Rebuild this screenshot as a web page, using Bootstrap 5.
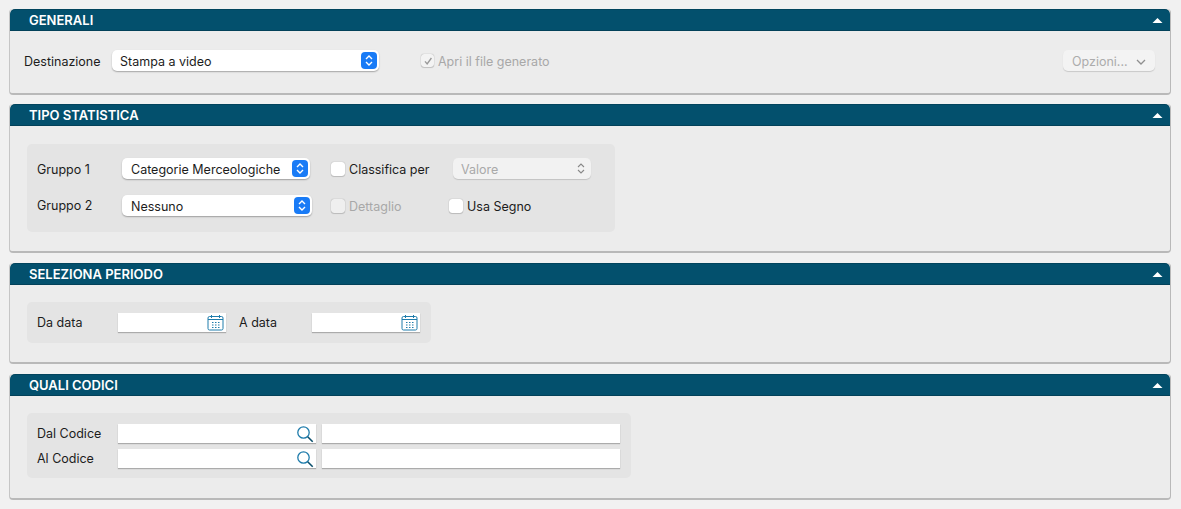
<!DOCTYPE html>
<html lang="it">
<head>
<meta charset="utf-8">
<title>Statistica</title>
<link href="https://cdn.jsdelivr.net/npm/bootstrap@5.3.0/dist/css/bootstrap.min.css" rel="stylesheet">
<script src="https://cdn.jsdelivr.net/npm/bootstrap@5.3.0/dist/js/bootstrap.bundle.min.js"></script>
<style>
html,body{height:509px;overflow:hidden}
body{background:#f1f1f1;font-family:Inter,"Liberation Sans",sans-serif;font-size:12.5px;color:#1c1c1c;padding:9px 10px 0 9px}
.pane{background:#ececec;border:0;border-right:1px solid #b9b9b9;border-bottom:2px solid #b9b9b9;border-left:1px solid #c6c6c6;border-radius:4px;margin-bottom:9px;overflow:hidden}
.pane-2{margin-bottom:10px}
.pane-3{margin-bottom:10px}
.pane-head{background:#03506d;color:#fff;font-weight:600;font-size:13px;height:22px;line-height:22px;padding:0 0 0 19px;border-top:1px solid #02445d;border-radius:0;display:flex;justify-content:space-between;align-items:center}
.pane-head svg{margin-right:7px;display:block}
.body-1{height:62px;padding:19px 15px 0 14px}
.body-2{height:125px;padding:18px 0 0 17px}
.body-3{height:77px;padding:17px 0 0 17px}
.body-4{height:102px;padding:17px 0 0 17px}
.grp{background:#e4e4e4;border-radius:5px}
.grp-2{width:588px;height:88px;padding:14px 0 0 10px}
.grp-3{width:404px;height:41px;padding:0 0 0 10px}
.grp-4{width:604px;height:65px;padding:11px 0 0 10px}
.mac-sel.form-select{height:21px;padding:2px 24px 0 8px;font-size:12.5px;line-height:19px;color:#1c1c1c;border:0;border-radius:5px;box-shadow:0 1px 1.5px rgba(0,0,0,.3);background-color:#fff;background-size:auto;background-position:right 2px center;background-image:url("data:image/svg+xml,%3Csvg xmlns='http://www.w3.org/2000/svg' width='16' height='17'%3E%3Crect width='16' height='17' rx='4' fill='%23197bf6'/%3E%3Cpath d='M5 7l3-3 3 3M5 10l3 3 3-3' fill='none' stroke='%23fff' stroke-width='1.4'/%3E%3C/svg%3E")}
.mac-sel.sel-off.form-select{background-color:#f2f2f2;color:#a9a9a9;opacity:1;box-shadow:0 1px 1px rgba(0,0,0,.15);background-image:url("data:image/svg+xml,%3Csvg xmlns='http://www.w3.org/2000/svg' width='16' height='17'%3E%3Cpath d='M5 7l3-3 3 3M5 10l3 3 3-3' fill='none' stroke='%23888' stroke-width='1.1'/%3E%3C/svg%3E")}
.pad-9.form-select{padding-left:9px}
.w-dest{width:267px}.w-g1{width:188px}.w-g2{width:190px}.w-val{width:138px}
.lab-dest{width:88px;padding-top:3px}.lab-g{width:85px;padding-top:2px}
.btn-opz.btn{width:92px;height:21px;padding:2px 9px 0;font-size:12.5px;line-height:19px;color:#acacac;background:#f3f3f3;border:0;border-radius:5px;box-shadow:0 1px 1px rgba(0,0,0,.15);display:flex;align-items:center;justify-content:space-between;opacity:1}
.form-check-input.cb{width:14px;height:14px;margin:0;border:0;border-radius:3px;background-color:#fff;box-shadow:0 0 1px rgba(0,0,0,.4),0 1px 1px rgba(0,0,0,.15);flex:none}
.form-check-input.cb:disabled{opacity:1;background-color:#efefef}
.form-check-input.cb-on:checked{background-color:#f3f3f3;background-size:12px;background-image:url("data:image/svg+xml,%3Csvg xmlns='http://www.w3.org/2000/svg' viewBox='0 0 14 14'%3E%3Cpath d='M3.5 7.5l2.5 3 5-7' fill='none' stroke='%23999' stroke-width='1.6'/%3E%3C/svg%3E");border:0;opacity:1}
.cb-sm.form-check-input.cb{width:13px;height:13px}
.off{color:#a8a8a8}
.txt-low{padding-top:3px}
.chk-apri{margin-left:42px;height:21px;gap:4px}
.cell-a{width:122px;gap:4px;margin-left:21px}
.cell-b{width:118px;gap:4px;margin-left:19px}
.cell-c{gap:4px}
.rows-2{gap:15px}
.fld{background:#fff;height:19px;box-shadow:0 1px 1px rgba(0,0,0,.25);display:flex;align-items:center}
.fld .form-control{background:transparent;border:0;border-radius:0;height:19px;padding:0 4px;font-size:12.5px;min-height:0;box-shadow:none}
.fld svg{flex:none;margin-right:2px}
.w-d{width:108px}.w-c{width:198px}.w-t{width:298px;margin-left:6px}
.lab-c{width:81px;line-height:19px}
.lab-a{width:73px;margin-left:13px;line-height:19px}
.rows-4{gap:6px}
</style>
</head>
<body>
<div class="card pane">
  <div class="card-header pane-head"><span>GENERALI</span><svg width="11" height="7" viewBox="0 0 11 7"><path d="M5.5 1L10.5 6H.5z" fill="#fff"/></svg></div>
  <div class="card-body body-1 d-flex align-items-start">
    <label class="lab-dest">Destinazione</label>
    <select class="form-select mac-sel w-dest"><option>Stampa a video</option></select>
    <div class="d-flex align-items-center off chk-apri"><input class="form-check-input cb cb-sm cb-on" type="checkbox" checked disabled><span class="txt-low">Apri il file generato</span></div>
    <button class="btn btn-opz ms-auto" disabled type="button"><span>Opzioni...</span><svg width="10" height="6" viewBox="0 0 10 6"><path d="M1 1l4 4 4-4" fill="none" stroke="#8f8f8f" stroke-width="1.3"/></svg></button>
  </div>
</div>

<div class="card pane pane-2">
  <div class="card-header pane-head"><span>TIPO STATISTICA</span><svg width="11" height="7" viewBox="0 0 11 7"><path d="M5.5 1L10.5 6H.5z" fill="#fff"/></svg></div>
  <div class="card-body body-2">
    <div class="grp grp-2 d-flex flex-column rows-2">
      <div class="d-flex align-items-center">
        <label class="lab-g">Gruppo 1</label>
        <select class="form-select mac-sel pad-9 w-g1"><option>Categorie Merceologiche</option></select>
        <div class="d-flex align-items-center cell-a"><input class="form-check-input cb" type="checkbox"><span class="txt-low">Classifica per</span></div>
        <select class="form-select mac-sel sel-off w-val" disabled><option>Valore</option></select>
      </div>
      <div class="d-flex align-items-center">
        <label class="lab-g">Gruppo 2</label>
        <select class="form-select mac-sel pad-9 w-g2"><option>Nessuno</option></select>
        <div class="d-flex align-items-center cell-b off"><input class="form-check-input cb" type="checkbox" disabled><span class="txt-low">Dettaglio</span></div>
        <div class="d-flex align-items-center cell-c"><input class="form-check-input cb" type="checkbox"><span class="txt-low">Usa Segno</span></div>
      </div>
    </div>
  </div>
</div>

<div class="card pane pane-3">
  <div class="card-header pane-head"><span>SELEZIONA PERIODO</span><svg width="11" height="7" viewBox="0 0 11 7"><path d="M5.5 1L10.5 6H.5z" fill="#fff"/></svg></div>
  <div class="card-body body-3">
    <div class="grp grp-3 d-flex align-items-center">
      <label class="lab-c">Da data</label>
      <div class="fld w-d"><input class="form-control" type="text" aria-label="Da data"><svg width="17" height="17" viewBox="0 0 17 17"><g fill="none" stroke="#1f7cab"><rect x="1" y="2.5" width="15" height="13.5" rx="1.5"/><path d="M1 5.5h15M4.5 1v3M12.5 1v3"/><path stroke-dasharray="1.5 1.5" d="M5 8.5h8M5 11h8M5 13.5h8"/></g></svg></div>
      <label class="lab-a">A data</label>
      <div class="fld w-d"><input class="form-control" type="text" aria-label="A data"><svg width="17" height="17" viewBox="0 0 17 17"><g fill="none" stroke="#1f7cab"><rect x="1" y="2.5" width="15" height="13.5" rx="1.5"/><path d="M1 5.5h15M4.5 1v3M12.5 1v3"/><path stroke-dasharray="1.5 1.5" d="M5 8.5h8M5 11h8M5 13.5h8"/></g></svg></div>
    </div>
  </div>
</div>

<div class="card pane">
  <div class="card-header pane-head"><span>QUALI CODICI</span><svg width="11" height="7" viewBox="0 0 11 7"><path d="M5.5 1L10.5 6H.5z" fill="#fff"/></svg></div>
  <div class="card-body body-4">
    <div class="grp grp-4 d-flex flex-column rows-4">
      <div class="d-flex align-items-center">
        <label class="lab-c">Dal Codice</label>
        <div class="fld w-c"><input class="form-control" type="text" aria-label="Dal Codice"><svg width="18" height="18" viewBox="0 0 18 18"><circle cx="7.5" cy="7.5" r="5.7" fill="none" stroke="#1f7cab" stroke-width="1.3"/><path d="M11.7 11.7l5 5" stroke="#0b4f6c" stroke-width="1.6"/></svg></div>
        <div class="fld w-t"><input class="form-control" type="text" aria-label="Descrizione dal codice"></div>
      </div>
      <div class="d-flex align-items-center">
        <label class="lab-c">Al Codice</label>
        <div class="fld w-c"><input class="form-control" type="text" aria-label="Al Codice"><svg width="18" height="18" viewBox="0 0 18 18"><circle cx="7.5" cy="7.5" r="5.7" fill="none" stroke="#1f7cab" stroke-width="1.3"/><path d="M11.7 11.7l5 5" stroke="#0b4f6c" stroke-width="1.6"/></svg></div>
        <div class="fld w-t"><input class="form-control" type="text" aria-label="Descrizione al codice"></div>
      </div>
    </div>
  </div>
</div>
</body>
</html>
